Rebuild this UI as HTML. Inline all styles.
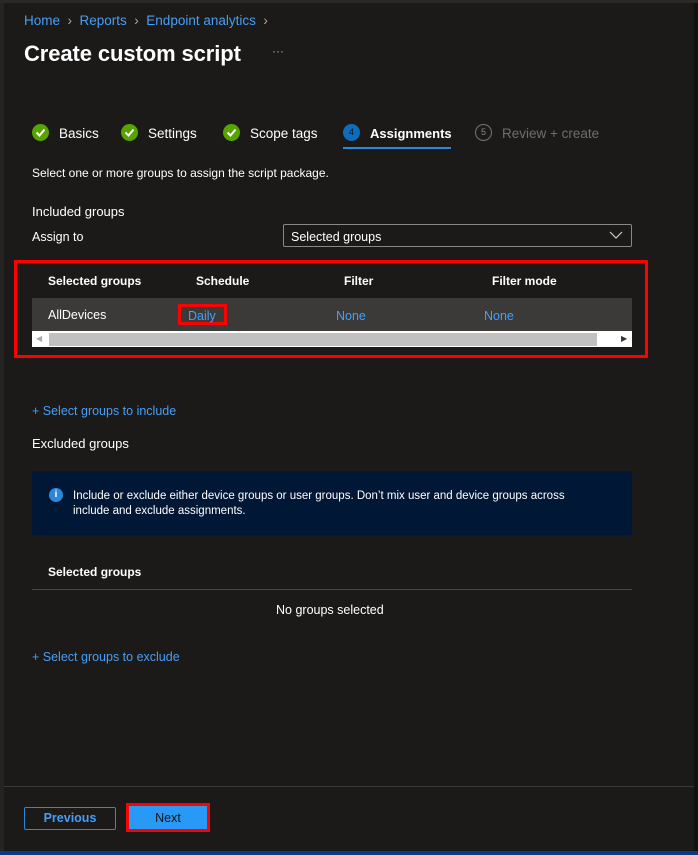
<!DOCTYPE html>
<html><head><style>
*{margin:0;padding:0;box-sizing:border-box}
body{width:698px;height:855px;background:#1b1a19;font-family:"Liberation Sans",sans-serif;color:#fff;position:relative;overflow:hidden;font-size:12.5px}
.a{position:absolute;white-space:nowrap}
.blue{color:#479ef5}
.chk{position:absolute;width:17px;height:17px;border-radius:50%;background:#57a300}
.chk svg{position:absolute;left:3px;top:3px}
</style></head><body>
<div class="a" style="left:0;top:0;width:4px;height:855px;background:#252423"></div>
<div class="a" style="left:694px;top:0;width:4px;height:855px;background:#111"></div>
<div class="a" style="left:0;top:0;width:698px;height:3px;background:#2a2928"></div>

<div class="a blue" style="left:24px;top:13px;font-size:13.5px">Home <span style="color:#aaa">&nbsp;›&nbsp;</span> Reports <span style="color:#aaa">&nbsp;›&nbsp;</span> Endpoint analytics <span style="color:#aaa">&nbsp;›</span></div>
<div class="a" style="left:24px;top:41px;font-size:22px;font-weight:bold;letter-spacing:-0.1px">Create custom script</div>
<div class="a" style="left:272px;top:44px;color:#aaa;font-size:12px">···</div>

<div class="chk" style="left:32px;top:124px"><svg width="11" height="11" viewBox="0 0 11 11"><path d="M1.5 5.5l3 3 5-6" stroke="#fff" stroke-width="2" fill="none"/></svg></div>
<div class="a" style="left:59px;top:126px;font-size:13.5px">Basics</div>
<div class="chk" style="left:121px;top:124px"><svg width="11" height="11" viewBox="0 0 11 11"><path d="M1.5 5.5l3 3 5-6" stroke="#fff" stroke-width="2" fill="none"/></svg></div>
<div class="a" style="left:148px;top:126px;font-size:13.5px">Settings</div>
<div class="chk" style="left:223px;top:124px"><svg width="11" height="11" viewBox="0 0 11 11"><path d="M1.5 5.5l3 3 5-6" stroke="#fff" stroke-width="2" fill="none"/></svg></div>
<div class="a" style="left:250px;top:126px;font-size:13.5px">Scope tags</div>
<div class="a" style="left:343px;top:124px;width:17px;height:17px;border-radius:50%;background:#0f6cbd;font-size:9px;text-align:center;line-height:17px;color:#111">4</div>
<div class="a" style="left:370px;top:126px;font-size:13px;font-weight:bold">Assignments</div>
<div class="a" style="left:343px;top:147px;width:108px;height:2px;background:#2b88d8"></div>
<div class="a" style="left:475px;top:124px;width:17px;height:17px;border-radius:50%;border:1px solid #777;font-size:9px;text-align:center;line-height:15px;color:#888">5</div>
<div class="a" style="left:502px;top:126px;font-size:13.5px;color:#6e6e6e">Review + create</div>

<div class="a" style="left:32px;top:166px;font-size:12px">Select one or more groups to assign the script package.</div>
<div class="a" style="left:32px;top:204px;font-size:13px">Included groups</div>
<div class="a" style="left:32px;top:230px">Assign to</div>
<div class="a" style="left:283px;top:224px;width:349px;height:23px;border:1px solid #8a8886;border-radius:2px;padding:5px 0 0 7px">Selected groups</div>
<svg class="a" style="left:609px;top:230px" width="14" height="10" viewBox="0 0 14 10"><path d="M1 2l6 6 6-6" stroke="#ccc" stroke-width="1.2" fill="none"/></svg>

<div class="a" style="left:14px;top:260px;width:634px;height:98px;border:3px solid #f00"></div>
<div class="a" style="left:48px;top:274px;font-weight:bold;font-size:12px">Selected groups</div>
<div class="a" style="left:196px;top:274px;font-weight:bold;font-size:12px">Schedule</div>
<div class="a" style="left:344px;top:274px;font-weight:bold;font-size:12px">Filter</div>
<div class="a" style="left:492px;top:274px;font-weight:bold;font-size:12px">Filter mode</div>
<div class="a" style="left:32px;top:298px;width:600px;height:33px;background:#3b3a39"></div>
<div class="a" style="left:48px;top:308px">AllDevices</div>
<div class="a" style="left:178px;top:304px;width:49px;height:21px;border:3px solid #f00"></div>
<div class="a blue" style="left:188px;top:309px">Daily</div>
<div class="a blue" style="left:336px;top:309px">None</div>
<div class="a blue" style="left:484px;top:309px">None</div>
<div class="a" style="left:32px;top:331px;width:600px;height:16px;background:#fff"></div>
<div class="a" style="left:49px;top:333px;width:548px;height:13px;background:#c1c1c1"></div>
<div class="a" style="left:36px;top:334px;font-size:8px;color:#aaa">◀</div>
<div class="a" style="left:621px;top:334px;font-size:8px;color:#333">▶</div>

<div class="a blue" style="left:32px;top:404px">+ Select groups to include</div>
<div class="a" style="left:32px;top:436px;font-size:13px">Excluded groups</div>
<div class="a" style="left:32px;top:471px;width:600px;height:64px;background:#001835;border-radius:2px"></div>
<div class="a" style="left:49px;top:488px;width:14px;height:14px;border-radius:50%;background:#2b88d8;color:#fff;font-size:10px;text-align:center;line-height:14px;font-weight:bold">i</div>
<div class="a" style="left:73px;top:489px;font-size:11.5px;line-height:15px">Include or exclude either device groups or user groups. Don’t mix user and device groups across<br>include and exclude assignments.</div>
<div class="a" style="left:48px;top:565px;font-weight:bold;font-size:12px">Selected groups</div>
<div class="a" style="left:32px;top:589px;width:600px;height:1px;background:#484644"></div>
<div class="a" style="left:276px;top:603px">No groups selected</div>
<div class="a blue" style="left:32px;top:650px">+ Select groups to exclude</div>

<div class="a" style="left:4px;top:786px;width:690px;height:1px;background:#3b3a39"></div>
<div class="a blue" style="left:24px;top:807px;width:92px;height:23px;border:1px solid #2b88d8;border-radius:2px;text-align:center;line-height:21px;font-weight:bold">Previous</div>
<div class="a" style="left:126px;top:803px;width:84px;height:29px;border:3px solid #f00;background:#2899f5;text-align:center;line-height:25px;color:#111">Next</div>
<div class="a" style="left:0;top:851px;width:698px;height:4px;background:#0a3a8a"></div>
</body></html>
